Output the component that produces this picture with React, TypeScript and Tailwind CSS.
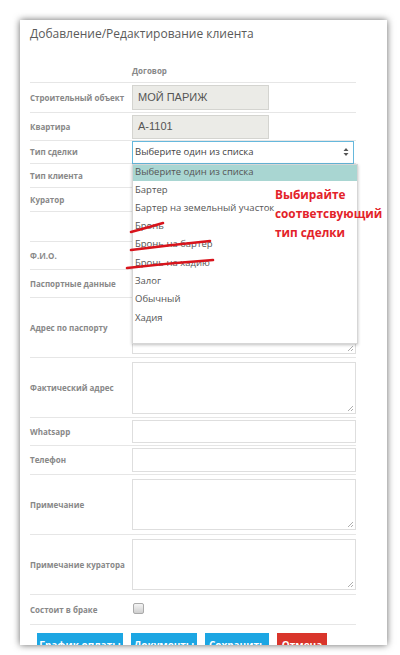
import React from 'react';

type RowProps = {
  label?: string;
  h: string;
  children?: React.ReactNode;
};

// one line of the form: label on the left, field on the right
const Row = ({ label, h, children }: RowProps) => (
  <div className={`flex items-center border-t border-[#e6e6e6] ${h}`}>
    <div className="w-[102px] shrink-0 whitespace-nowrap text-[8px] font-bold text-[#888]">{label}</div>
    <div className="relative flex-1">{children}</div>
  </div>
);

const options = [
  'Бартер',
  'Бартер на земельный участок',
  'Бронь',
  'Бронь на бартер',
  'Бронь на хадию',
  'Залог',
  'Обычный',
  'Хадия',
];

const Input = ({ h = 'h-[23px]' }: { h?: string }) => (
  <div className={`w-[224px] ${h} border border-[#dedede] bg-white`} />
);

const Area = ({ h = 'h-[52px]' }: { h?: string }) => (
  <div className={`relative w-[224px] ${h} border border-[#dedede] bg-white`}>
    <svg className="absolute bottom-[1px] right-[1px]" width="7" height="7" viewBox="0 0 7 7">
      <path d="M6 1 L1 6 M6 4 L4 6" stroke="#999" strokeWidth="0.8" />
    </svg>
  </div>
);

const App = () => {
  return (
    <div className="relative w-[400px] h-[655px] bg-white overflow-hidden" style={{ fontFamily: '"Open Sans", "Noto Sans", sans-serif' }}>
      <div className="ml-[20px] mt-[20px] w-[367px] h-[625px] bg-white shadow-[0_0_7px_rgba(0,0,0,0.6)] overflow-hidden pl-[10px] pr-[31px]">
        <div className="h-[40px] pt-[5px] text-[12px] text-[#5a5a5a]">Добавление/Редактирование клиента</div>
        <div className="h-[22px] pl-[102px] flex items-center text-[8px] font-bold text-[#888]">Договор</div>

        <Row label="Строительный объект" h="h-[30px]">
          <div className="w-[137px] h-[25px] border border-[#d4d4d0] bg-[#ebebe7] flex items-center pl-[5px] text-[11px] text-[#555]" style={{ fontFamily: '"Liberation Sans", Arial, sans-serif' }}>
            МОЙ ПАРИЖ
          </div>
        </Row>
        <Row label="Квартира" h="h-[28px]">
          <div className="w-[137px] h-[24px] border border-[#d4d4d0] bg-[#ebebe7] flex items-center pl-[5px] text-[11px] text-[#555]" style={{ fontFamily: '"Liberation Sans", Arial, sans-serif' }}>
            А-1101
          </div>
        </Row>
        <Row label="Тип сделки" h="h-[23px]">
          <div className="w-[222px] h-[23px] border border-[#66b8dc] bg-white flex items-center justify-between pl-[2px] pr-[4px] text-[9.5px] text-[#444]">
            <span>Выберите один из списка</span>
            <svg width="6" height="10" viewBox="0 0 6 10">
              <path d="M0.5 4 L3 1 L5.5 4 Z M0.5 6 L3 9 L5.5 6 Z" fill="#555" />
            </svg>
          </div>
          <div className="absolute left-0 top-[23px] z-10 w-[226px] h-[180px] bg-white border border-[#d6d6d6] shadow-[0_1px_3px_rgba(0,0,0,0.25)] text-[9.5px] text-[#555]">
            <div className="h-[16px] bg-[#a9d6d2] flex items-center pl-[2px]">Выберите один из списка</div>
            <div className="flex flex-col">
              {options.map((o) => (
                <div key={o} className="h-[18.3px] flex items-center pl-[2px] whitespace-nowrap">{o}</div>
              ))}
            </div>
          </div>
        </Row>
        <Row label="Тип клиента" h="h-[24px]" />
        <Row label="Куратор" h="h-[24px]" />
        <Row h="h-[30px]" />
        <Row label="Ф.И.О." h="h-[28px]"><Input h="h-[25px]" /></Row>
        <Row label="Паспортные данные" h="h-[28px]"><Input h="h-[24px]" /></Row>
        <Row label="Адрес по паспорту" h="h-[60px]"><Area /></Row>
        <Row label="Фактический адрес" h="h-[60px]"><Area /></Row>
        <Row label="Whatsapp" h="h-[28px]"><Input /></Row>
        <Row label="Телефон" h="h-[29px]"><Input h="h-[24px]" /></Row>
        <Row label="Примечание" h="h-[60px]"><Area h="h-[51px]" /></Row>
        <Row label="Примечание куратора" h="h-[60px]"><Area h="h-[51px]" /></Row>
        <Row label="Состоит в браке" h="h-[30px]">
          <span className="block ml-[1px] mb-[2px] w-[11px] h-[11px] rounded-[2px] border border-[#aaa] bg-gradient-to-b from-[#f4f4f4] to-[#cfcfcf]" />
        </Row>

        <div className="border-t border-[#e6e6e6] w-[326px] pt-[8px] pl-[7px] flex gap-[8px] text-[10px] font-bold text-white whitespace-nowrap">
          <div className="w-[86px] h-[24px] bg-[#1ca6e3] flex items-center justify-center">График оплаты</div>
          <div className="w-[66px] h-[24px] bg-[#1ca6e3] flex items-center justify-center">Документы</div>
          <div className="w-[64px] h-[24px] bg-[#1ca6e3] flex items-center justify-center">Сохранить</div>
          <div className="w-[50px] h-[24px] bg-[#d9352b] flex items-center justify-center">Отмена</div>
        </div>
      </div>

      {/* red annotation drawn over the screenshot */}
      <div className="absolute left-[275px] top-[185px] z-20 text-[11.8px] leading-[19px] font-bold text-[#e3232a]">
        <div>Выбирайте</div>
        <div>соответсвующий</div>
        <div>тип сделки</div>
      </div>
      <svg className="absolute left-0 top-0 z-20" width="400" height="655" viewBox="0 0 400 655">
        <g stroke="#d8141c" strokeWidth="2.6" strokeLinecap="round" fill="none">
          <path d="M131 232 Q146 228 163 223" />
          <path d="M131 250 Q170 245 210 241" />
          <path d="M127 268 Q170 263 213 260" />
        </g>
      </svg>
    </div>
  );
};

export default App;
